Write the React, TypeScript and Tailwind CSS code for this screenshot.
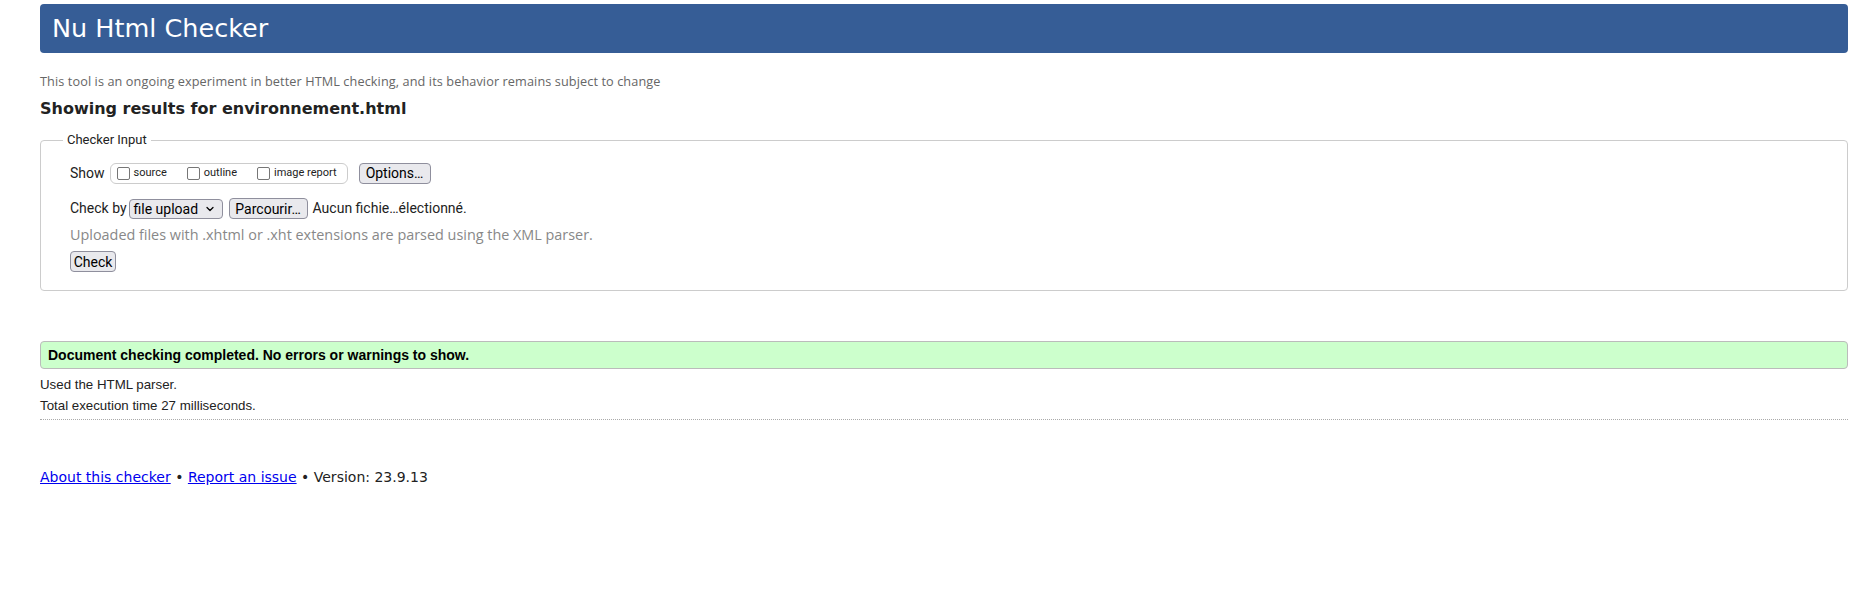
import React from 'react';
import { ChevronDown } from 'lucide-react';

const ubuntu = { fontFamily: '"Open Sans", Roboto, sans-serif' };
const roboto = { fontFamily: 'Roboto, "Open Sans", sans-serif' };

const Box: React.FC<{ label: string }> = ({ label }) => (
  <label className="flex items-center">
    <span className="w-[13px] h-[13px] border border-[#767676] rounded-[2px] bg-white mr-[4px]" />
    <span className="text-[11px] text-[#222]" style={roboto}>{label}</span>
  </label>
);

const Btn: React.FC<{ children: React.ReactNode; className?: string }> = ({ children, className = '' }) => (
  <button
    className={`h-[21px] px-[6px] bg-[#e9e9ed] border border-[#8f8f9d] rounded-[4px] text-[14px] leading-none text-black flex items-center ${className}`}
    style={roboto}
  >
    {children}
  </button>
);

const App: React.FC = () => {
  return (
    <div className="w-[1870px] h-[600px] bg-white">
      <div className="ml-[40px] w-[1808px] pt-[4px]">
        <div className="h-[49px] bg-[#365d96] rounded-[4px] flex items-center pl-[12px]">
          <h1 className="text-white text-[25.5px] leading-none" style={{ fontFamily: '"DejaVu Sans", sans-serif' }}>
            Nu Html Checker
          </h1>
        </div>

        <p className="mt-[20px] text-[12.7px] leading-[16px] text-[#666] tracking-[0.1px]" style={ubuntu}>
          This tool is an ongoing experiment in better HTML checking, and its behavior remains subject to change
        </p>

        <h2
          className="mt-[10px] text-[16px] leading-[20px] font-bold text-[#222]"
          style={{ fontFamily: '"DejaVu Sans", sans-serif' }}
        >
          Showing results for environnement.html
        </h2>

        <fieldset
          className="mt-[13px] border border-[#ccc] rounded-[4px] px-[22px] pb-[18px] h-[159px]"
          style={ubuntu}
        >
          <legend className="px-[4px] text-[13px] leading-[16px] text-[#222]" style={roboto}>Checker Input</legend>
          <div className="pl-[7px] pt-[14px] text-[14px] text-[#222]">
            <div className="flex items-center h-[22px]">
              <span className="mr-[5px]" style={roboto}>Show</span>
              <div className="h-[21px] w-[238px] border border-[#ccc] rounded-[6px] flex items-center pl-[6px] gap-[20px]">
                <Box label="source" />
                <Box label="outline" />
                <Box label="image report" />
              </div>
              <Btn className="ml-[11px] w-[72px] justify-center">Options…</Btn>
            </div>

            <div className="flex items-center h-[21px] mt-[14px]" style={roboto}>
              <span className="mr-[2px]">Check by</span>
              <button className="h-[20px] w-[94px] bg-[#e9e9ed] border border-[#8f8f9d] rounded-[4px] text-[14px] leading-none flex items-center justify-between pl-[4px] pr-[6px] text-black">
                file upload
                <ChevronDown size={12} strokeWidth={2.5} />
              </button>
              <Btn className="ml-[6px] h-[20px] w-[79px] justify-center">Parcourir…</Btn>
              <span className="ml-[5px]">Aucun fichie…électionné.</span>
            </div>

            <p className="mt-[6px] leading-[20px] text-[14.4px] text-[#888]">
              Uploaded files with .xhtml or .xht extensions are parsed using the XML parser.
            </p>

            <Btn className="mt-[6px] h-[20px] w-[46px] justify-center">Check</Btn>
          </div>
        </fieldset>

        <div
          className="mt-[50px] h-[28px] bg-[#ccffcc] border border-[#bbb] rounded-[4px] flex items-center pl-[7px] text-[14px] font-bold text-black"
          style={{ fontFamily: '"Liberation Sans", Arial, sans-serif' }}
        >
          Document checking completed. No errors or warnings to show.
        </div>

        <div className="text-[13.3px] text-[#222]" style={{ fontFamily: '"Liberation Sans", Arial, sans-serif' }}>
          <p className="mt-[6px] leading-[20px]">Used the HTML parser.</p>
          <p className="mt-[1px] leading-[20px]">Total execution time 27 milliseconds.</p>
        </div>

        <div className="mt-[3px] border-t border-dotted border-[#aaa]" />

        <p className="mt-[48px] text-[14px] leading-[18px] text-[#222]" style={{ fontFamily: '"DejaVu Sans", sans-serif' }}>
          <a href="#" className="text-[#0000ee] underline">About this checker</a>
          {' • '}
          <a href="#" className="text-[#0000ee] underline">Report an issue</a>
          {' • Version: 23.9.13'}
        </p>
      </div>
    </div>
  );
};

export default App;
